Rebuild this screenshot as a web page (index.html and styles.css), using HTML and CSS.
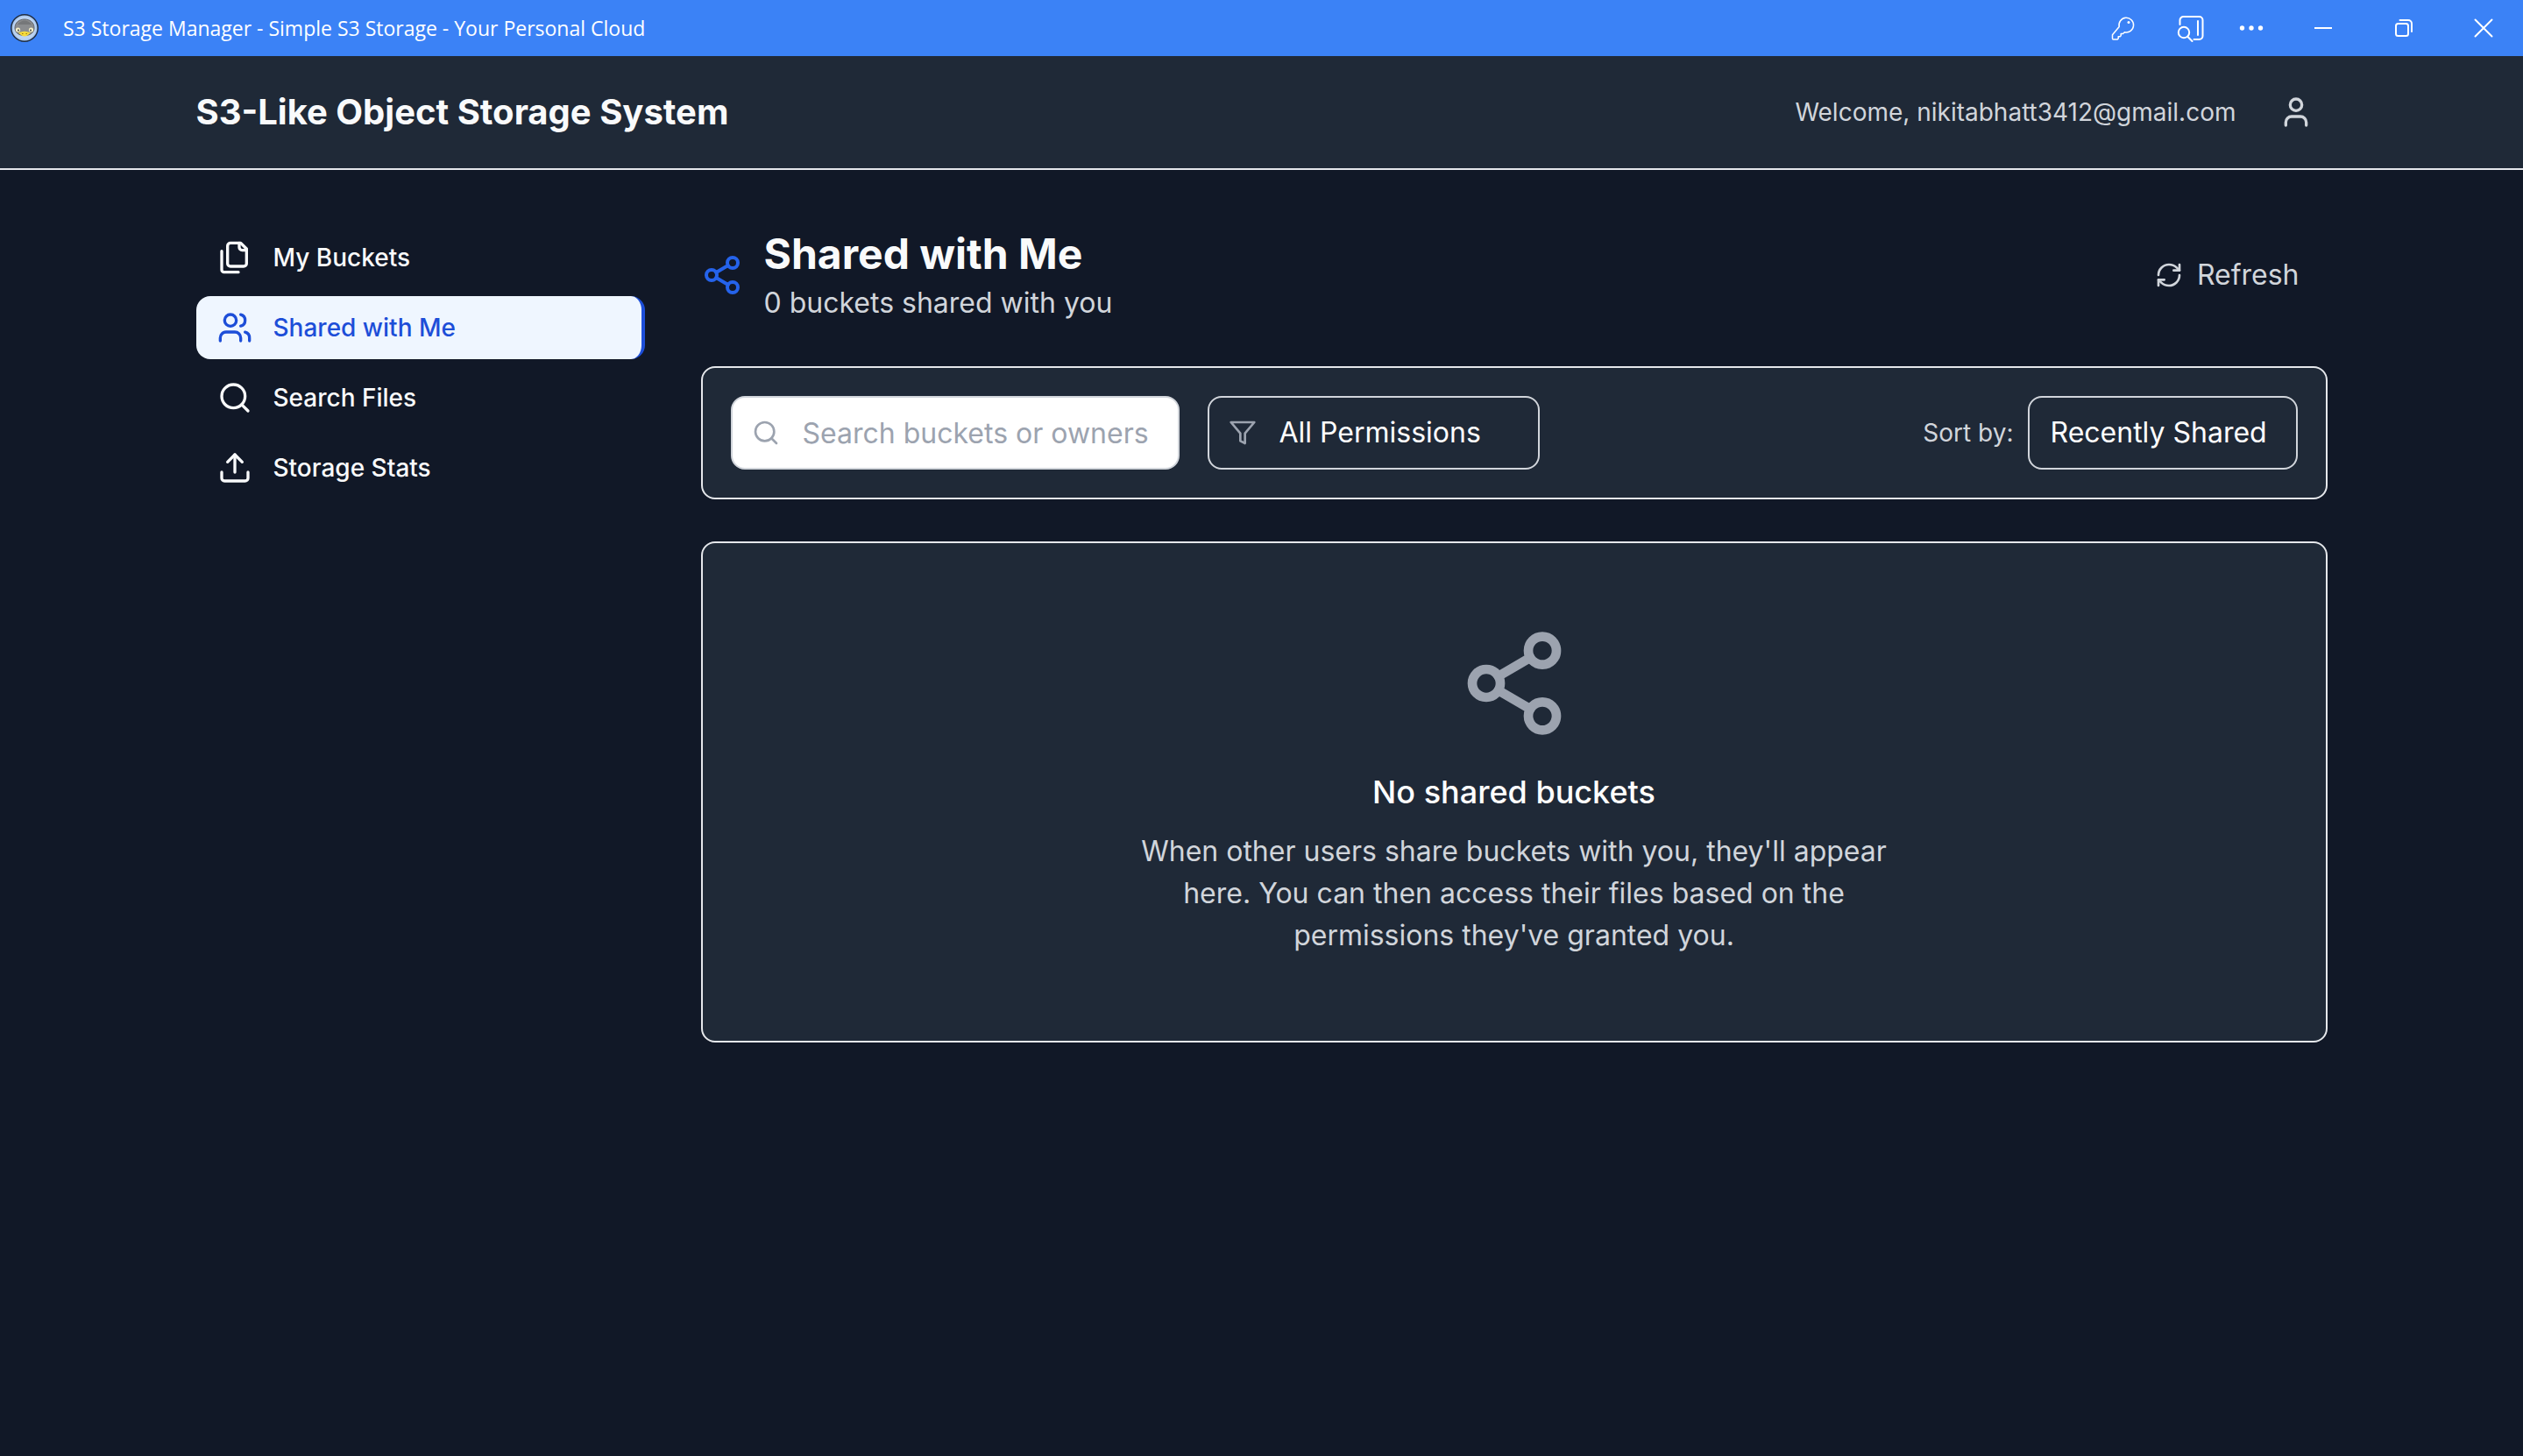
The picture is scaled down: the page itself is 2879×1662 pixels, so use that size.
FILE: index.html
```html
<!DOCTYPE html>
<html lang="en">
<head>
<meta charset="utf-8">
<meta name="viewport" content="width=device-width, initial-scale=1">
<title>S3 Storage Manager - Simple S3 Storage - Your Personal Cloud</title>
<link rel="stylesheet" href="styles.css">
</head>
<body>
<div class="titlebar">
  <svg class="app-icon" viewBox="0 0 32 32" aria-hidden="true">
    <circle cx="16" cy="16" r="15.200" fill="#a9c8ee" stroke="#1f2d42" stroke-width="1.500"/>
    <circle cx="16" cy="16" r="13" fill="#bcd4f2"/>
    <path d="M5 16C5 9.500 10 6 16 6s11 3.500 11 10c0 5-4 8.500-11 8.500S5 21 5 16z" fill="#8b8d8f" stroke="#64676b"/>
    <path d="M8 12c2-3 5-4.500 8-4.500s6 1.500 8 4.500z" fill="#757779"/>
    <circle cx="8.500" cy="18" r="2.600" fill="#f4efc8"/>
    <circle cx="23.500" cy="18" r="2.600" fill="#f4efc8"/>
    <circle cx="9" cy="18.500" r="0.900" fill="#333"/>
    <circle cx="23" cy="18.500" r="0.900" fill="#333"/>
    <path d="M9 21c3-.2 5-1.200 7-1.200s4 1 7 1.200c-2 2.500-4.500 4.500-7 4.500S11 23.500 9 21z" fill="#f5da3c"/>
    <path d="M13 22.500h1.500M17.500 22.500H19" fill="none" stroke="#9a7a10"/>
  </svg>
  <span class="titlebar-text">S3 Storage Manager - Simple S3 Storage - Your Personal Cloud</span>
  <div class="window-controls">
    <button type="button" aria-label="Passwords"><svg viewBox="0 0 32 32"><path d="M11.200 14.500a8.300 8.300 0 1 1 6.200 6.200L15.500 22.500h-2.300v2.300l-1 1h-2v2.200l-1 1H4.500a1 1 0 0 1-1-1v-4.200z"/><circle cx="22" cy="9.500" r="1.500" class="dot"/></svg></button>
    <button type="button" aria-label="Search in sidebar"><svg viewBox="0 0 32 32"><path class="bold" d="M3.500 12V7a4 4 0 0 1 4-4h18a4 4 0 0 1 4 4v18a4 4 0 0 1-4 4h-6M24 8v16M12.500 26l5 5"/><circle class="bold" cx="8" cy="21" r="6.200"/></svg></button>
    <button type="button" aria-label="More options"><svg viewBox="0 0 32 32"><circle class="dot" cx="5.500" cy="16" r="2.700"/><circle class="dot" cx="16" cy="16" r="2.700"/><circle class="dot" cx="26.500" cy="16" r="2.700"/></svg></button>
    <button type="button" aria-label="Minimize"><svg viewBox="0 0 32 32"><path class="square" d="M6 16h20"/></svg></button>
    <button type="button" aria-label="Restore"><svg viewBox="0 0 32 32"><rect class="bold" x="7" y="11" width="14" height="14" rx="2.500"/><path class="bold" d="M11.500 7H21a4 4 0 0 1 4 4v9"/></svg></button>
    <button type="button" aria-label="Close"><svg viewBox="0 0 32 32"><path class="bold" d="M6.500 6.500l19 19M25.500 6.500l-19 19"/></svg></button>
  </div>
</div>

<header class="site-header">
  <div class="container header-row">
    <h1>S3-Like Object Storage System</h1>
    <div class="account">
      <span>Welcome, nikitabhatt3412@gmail.com</span>
      <button type="button" class="account-button" aria-label="Account">
        <svg class="icon icon-md" viewBox="0 0 24 24"><path d="M19 21v-2a4 4 0 0 0-4-4H9a4 4 0 0 0-4 4v2"/><circle cx="12" cy="7" r="4"/></svg>
      </button>
    </div>
  </div>
</header>

<div class="container layout">
  <nav class="sidebar">
    <a href="#buckets" class="nav-item">
      <svg class="icon icon-md" viewBox="0 0 24 24"><path d="M20 7h-3a2 2 0 0 1-2-2V2"/><path d="M9 18a2 2 0 0 1-2-2V4a2 2 0 0 1 2-2h7l4 4v10a2 2 0 0 1-2 2Z"/><path d="M3 7.600v12.800A1.600 1.600 0 0 0 4.600 22h9.800"/></svg>
      My Buckets
    </a>
    <a href="#shared" class="nav-item active" aria-current="page">
      <svg class="icon icon-md" viewBox="0 0 24 24"><path d="M16 21v-2a4 4 0 0 0-4-4H6a4 4 0 0 0-4 4v2"/><circle cx="9" cy="7" r="4"/><path d="M22 21v-2a4 4 0 0 0-3-3.870"/><path d="M16 3.130a4 4 0 0 1 0 7.750"/></svg>
      Shared with Me
    </a>
    <a href="#search" class="nav-item">
      <svg class="icon icon-md" viewBox="0 0 24 24"><circle cx="11" cy="11" r="8"/><path d="m21 21-4.300-4.300"/></svg>
      Search Files
    </a>
    <a href="#stats" class="nav-item">
      <svg class="icon icon-md" viewBox="0 0 24 24"><path d="M21 15v4a2 2 0 0 1-2 2H5a2 2 0 0 1-2-2v-4"/><path d="m17 8-5-5-5 5"/><path d="M12 3v12"/></svg>
      Storage Stats
    </a>
  </nav>

  <main class="content">
    <div class="page-head">
      <svg class="icon icon-lg share" viewBox="0 0 24 24"><circle cx="18" cy="5" r="3"/><circle cx="6" cy="12" r="3"/><circle cx="18" cy="19" r="3"/><path d="M8.590 13.510l6.830 3.980M15.410 6.510l-6.820 3.980"/></svg>
      <div class="page-title">
        <h2>Shared with Me</h2>
        <p>0 buckets shared with you</p>
      </div>
      <button type="button" class="refresh">
        <svg class="icon icon-sm" viewBox="0 0 24 24"><path d="M3 12a9 9 0 0 1 9-9 9.750 9.750 0 0 1 6.740 2.740L21 8"/><path d="M21 3v5h-5"/><path d="M21 12a9 9 0 0 1-9 9 9.750 9.750 0 0 1-6.740-2.740L3 16"/><path d="M8 16H3v5"/></svg>
        Refresh
      </button>
    </div>

    <section class="card filters">
      <div class="field">
        <svg class="icon icon-sm field-icon" viewBox="0 0 24 24"><circle cx="11" cy="11" r="8"/><path d="m21 21-4.300-4.300"/></svg>
        <input class="control search-input" type="text" placeholder="Search buckets or owners" aria-label="Search buckets or owners">
      </div>
      <div class="field">
        <svg class="icon icon-sm field-icon" viewBox="0 0 24 24"><path d="M22 3H2l8 9.460V19l4 2v-8.540z"/></svg>
        <select class="control permission-select" aria-label="Permissions">
          <option>All Permissions</option>
        </select>
      </div>
      <div class="sort">
        <label for="sort">Sort by:</label>
        <select class="control sort-select" id="sort">
          <option>Recently Shared</option>
        </select>
      </div>
    </section>

    <section class="card empty">
      <svg class="icon icon-xl" viewBox="0 0 24 24"><circle cx="18" cy="5" r="3"/><circle cx="6" cy="12" r="3"/><circle cx="18" cy="19" r="3"/><path d="M8.590 13.510l6.830 3.980M15.410 6.510l-6.820 3.980"/></svg>
      <h3>No shared buckets</h3>
      <p>When other users share buckets with you, they'll appear here. You can then access their files based on the permissions they've granted you.</p>
    </section>
  </main>
</div>
</body>
</html>
```
FILE: styles.css
```css
*, *::before, *::after {
  box-sizing: border-box;
}

body, h1, h2, h3, p {
  margin: 0;
}

body {
  min-height: 100vh;
  background: #111827;
  color: #f9fafb;
  font-family: Inter, "Liberation Sans", sans-serif;
  font-size: 32px;
  line-height: 48px;
}

button, input, select {
  font: inherit;
  color: inherit;
}

button {
  background: none;
  border: 0;
  padding: 0;
  cursor: pointer;
}

/* Window title bar */
.titlebar {
  display: flex;
  align-items: center;
  height: 64px;
  padding-left: 12px;
  background: #3b82f6;
  color: #fff;
}

.app-icon {
  width: 32px;
  height: 32px;
  margin-right: 28px;
}

.titlebar-text {
  font-family: "Open Sans", "Noto Sans", sans-serif;
  font-size: 23px;
  line-height: 32px;
}

.window-controls {
  display: grid;
  grid-template-columns: 88px 66px 72px 92px 92px 90px;
  height: 100%;
  margin-left: auto;
}

.window-controls button {
  display: grid;
  place-items: center;
}

.window-controls svg {
  width: 32px;
  height: 32px;
  fill: none;
  stroke: #fff;
  stroke-width: 1.5;
  stroke-linecap: round;
  stroke-linejoin: round;
}

.window-controls .bold {
  stroke-width: 2;
}

.window-controls .square {
  stroke-width: 2;
  stroke-linecap: butt;
}

.window-controls .dot {
  fill: #fff;
  stroke: none;
}

/* Shared pieces */
.container {
  width: 100%;
  max-width: 2560px;
  margin: 0 auto;
  padding: 0 64px;
}

.icon {
  display: block;
  flex: none;
  fill: none;
  stroke: currentColor;
  stroke-width: 2;
  stroke-linecap: round;
  stroke-linejoin: round;
}

.icon-sm { width: 32px; height: 32px; }
.icon-md { width: 40px; height: 40px; }
.icon-lg { width: 48px; height: 48px; }
.icon-xl { width: 128px; height: 128px; }

.card {
  background: #1f2937;
  border: 2px solid #e5e7eb;
  border-radius: 16px;
}

/* Header */
.site-header {
  background: #1f2937;
  border-bottom: 2px solid #e5e7eb;
}

.header-row {
  display: flex;
  align-items: center;
  justify-content: space-between;
  height: 128px;
}

h1 {
  font-size: 40px;
  line-height: 56px;
  font-weight: 700;
}

.account {
  display: flex;
  align-items: center;
  gap: 32px;
  color: #d1d5db;
  font-size: 28px;
  line-height: 40px;
}

.account-button {
  padding: 16px;
}

/* Page layout */
.layout {
  display: flex;
  gap: 64px;
  padding-top: 64px;
  padding-bottom: 64px;
}

.sidebar {
  flex: none;
  display: flex;
  flex-direction: column;
  gap: 8px;
  width: 512px;
}

.nav-item {
  display: flex;
  align-items: center;
  gap: 24px;
  padding: 16px 24px;
  border-radius: 16px;
  color: #f9fafb;
  font-size: 28px;
  line-height: 40px;
  font-weight: 500;
  text-decoration: none;
}

.nav-item.active {
  background: #eff6ff;
  border-right: 4px solid #1d4ed8;
  color: #1d4ed8;
}

.content {
  flex: 1;
  min-width: 0;
  display: flex;
  flex-direction: column;
  gap: 48px;
}

.page-head {
  display: flex;
  align-items: center;
  gap: 24px;
}

.share {
  color: #2563eb;
}

h2 {
  font-size: 48px;
  line-height: 64px;
  font-weight: 700;
}

.page-title p {
  color: #d1d5db;
}

.refresh {
  display: flex;
  align-items: center;
  gap: 16px;
  margin-left: auto;
  padding: 16px 32px;
  color: #d1d5db;
}

/* Filter bar */
.filters {
  display: flex;
  align-items: center;
  gap: 32px;
  padding: 32px;
}

.field {
  position: relative;
}

.field-icon {
  position: absolute;
  left: 24px;
  top: 26px;
  color: #9ca3af;
  pointer-events: none;
}

.control {
  appearance: none;
  display: block;
  height: 84px;
  padding: 16px 24px;
  border: 2px solid #d1d5db;
  border-radius: 16px;
  background: transparent;
  color: #fff;
}

.search-input {
  width: 512px;
  padding-left: 80px;
  background: #fff;
  color: #111827;
}

.search-input::placeholder {
  color: #9ca3af;
  opacity: 1;
}

.permission-select {
  padding-left: 80px;
  padding-right: 64px;
}

.sort {
  display: flex;
  align-items: center;
  gap: 16px;
  margin-left: auto;
}

.sort label {
  color: #d1d5db;
  font-size: 28px;
  line-height: 40px;
}

.sort-select {
  padding-right: 32px;
}

/* Empty state */
.empty {
  display: flex;
  flex-direction: column;
  align-items: center;
  padding: 96px;
  text-align: center;
}

.empty .icon {
  color: #9ca3af;
}

h3 {
  margin: 32px 0 16px;
  color: #fff;
  font-size: 36px;
  line-height: 56px;
  font-weight: 500;
}

.empty p {
  max-width: 896px;
  color: #d1d5db;
}
```
